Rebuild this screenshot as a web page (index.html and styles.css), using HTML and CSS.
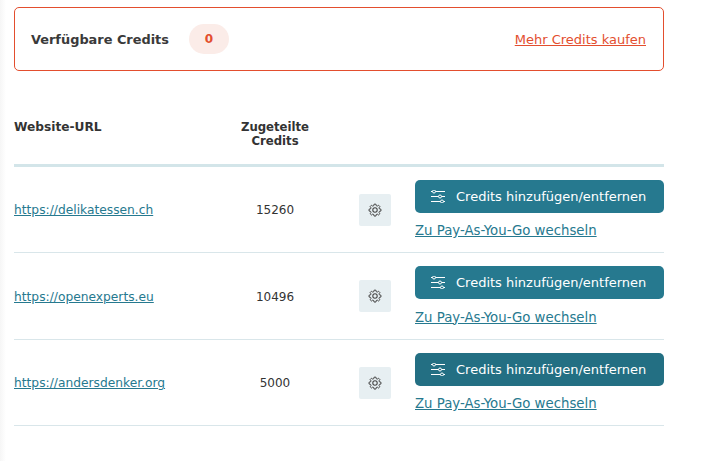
FILE: index.html
```html
<!DOCTYPE html>
<html lang="de">
<head>
<meta charset="utf-8">
<title>Credits</title>
<link rel="stylesheet" href="styles.css">
</head>
<body>
<svg class="defs" width="0" height="0" aria-hidden="true">
  <symbol id="gear" viewBox="0 0 24 24">
    <path fill="none" stroke="currentColor" stroke-width="1.8" stroke-linejoin="round" d="M10.300 2.500h3.400l.5 2.700 1.900.8 2.300-1.600 2.400 2.400-1.600 2.300.8 1.900 2.700.5v3.400l-2.700.5-.8 1.900 1.600 2.300-2.400 2.400-2.300-1.600-1.900.8-.5 2.700h-3.400l-.5-2.700-1.900-.8-2.300 1.600-2.400-2.400 1.600-2.300-.8-1.900-2.700-.5v-3.400l2.700-.5.8-1.900-1.600-2.300 2.400-2.400 2.300 1.600 1.900-.8z" transform="translate(12 12) scale(.95) translate(-12 -13)"/>
    <circle cx="12" cy="12" r="3.800" fill="none" stroke="currentColor" stroke-width="1.800"/>
  </symbol>
  <symbol id="sliders" viewBox="0 0 14 13">
    <g fill="none" stroke="currentColor" stroke-width="1">
      <path d="M4.500 1.500H14M0 1.500H1.500M0 6.500H7.500M10.500 6.500H14M0 11.500H9.500M12.500 11.500H14"/>
      <circle cx="3" cy="1.500" r="1.500"/>
      <circle cx="9" cy="6.500" r="1.500"/>
      <circle cx="11" cy="11.500" r="1.500"/>
    </g>
  </symbol>
</svg>
<main class="page">
  <section class="credits-box">
    <div class="credits-info">
      <strong class="credits-label">Verfügbare Credits</strong>
      <span class="credits-pill">0</span>
    </div>
    <a class="buy-link" href="#">Mehr Credits kaufen</a>
  </section>

  <div class="table">
    <div class="row head">
      <div class="head-url">Website-URL</div>
      <div class="head-credits">Zugeteilte<br>Credits</div>
    </div>

    <div class="row item">
      <a class="site" href="#">https://delikatessen.ch</a>
      <div class="amount">15260</div>
      <div class="gear-cell"><button class="gear"><svg class="gear-icon"><use href="#gear"/></svg></button></div>
      <div class="actions">
        <button class="primary"><svg class="slider-icon"><use href="#sliders"/></svg>Credits hinzufügen/entfernen</button>
        <a class="switch" href="#">Zu Pay-As-You-Go wechseln</a>
      </div>
    </div>

    <div class="row item">
      <a class="site" href="#">https://openexperts.eu</a>
      <div class="amount">10496</div>
      <div class="gear-cell"><button class="gear"><svg class="gear-icon"><use href="#gear"/></svg></button></div>
      <div class="actions">
        <button class="primary"><svg class="slider-icon"><use href="#sliders"/></svg>Credits hinzufügen/entfernen</button>
        <a class="switch" href="#">Zu Pay-As-You-Go wechseln</a>
      </div>
    </div>

    <div class="row item">
      <a class="site" href="#">https://andersdenker.org</a>
      <div class="amount">5000</div>
      <div class="gear-cell"><button class="gear"><svg class="gear-icon"><use href="#gear"/></svg></button></div>
      <div class="actions">
        <button class="primary primary-dark"><svg class="slider-icon"><use href="#sliders"/></svg>Credits hinzufügen/entfernen</button>
        <a class="switch" href="#">Zu Pay-As-You-Go wechseln</a>
      </div>
    </div>
  </div>
</main>
</body>
</html>
```

FILE: styles.css
```css
* { box-sizing: border-box; }

html, body { height: 100%; }

body {
  margin: 0;
  overflow: hidden;
  background: linear-gradient(to right, #f6f6f6 0, #ffffff 6px);
  color: #333333;
  font-family: "DejaVu Sans", Verdana, sans-serif;
  font-size: 12px;
}

.defs { position: absolute; }

.page {
  width: 664px;
  padding: 7px 0 0 14px;
}

.credits-box {
  display: flex;
  align-items: center;
  justify-content: space-between;
  height: 64px;
  padding: 0 17px 0 16px;
  border: 1px solid #e34e2e;
  border-radius: 5px;
}

.credits-info {
  display: flex;
  align-items: center;
  gap: 20px;
}

.credits-label {
  font-size: 12.9px;
  color: #3a3a3a;
}

.credits-pill {
  display: flex;
  align-items: center;
  justify-content: center;
  width: 40px;
  height: 30px;
  border-radius: 15px;
  background: #fbece8;
  color: #e34e2e;
  font-size: 12px;
  font-weight: 700;
}

.buy-link {
  color: #e34e2e;
  font-size: 13px;
}

.table { margin-top: 49px; }

.row {
  display: grid;
  grid-template-columns: 201px 120px 80px 249px;
  align-items: center;
}

.head {
  height: 46.6px;
  align-items: start;
  border-bottom: 3px solid #d3e5e9;
  font-size: 11.7px;
  font-weight: 700;
  line-height: 14px;
  color: #333333;
}

.head-url { font-size: 12.2px; }

.head-credits { text-align: center; }

.item {
  height: 86.5px;
  border-bottom: 1px solid #d9e6ea;
}

.site {
  padding-top: 2px;
  color: #26798f;
  font-size: 12.25px;
}

.amount {
  padding-top: 1.5px;
  text-align: center;
  font-size: 12px;
}

.gear-cell {
  display: flex;
  justify-content: center;
  padding-top: 1px;
}

.gear {
  display: flex;
  align-items: center;
  justify-content: center;
  width: 32px;
  height: 32px;
  padding: 0;
  border: 0;
  border-radius: 2px;
  background: #e7eff2;
  color: #444444;
}

.gear-icon {
  width: 14px;
  height: 14px;
}

.actions {
  display: flex;
  flex-direction: column;
  gap: 10.5px;
}

.primary {
  display: flex;
  align-items: center;
  height: 33px;
  padding: 0 0 0 16px;
  border: 0;
  border-radius: 5px;
  background: #26798f;
  color: #ffffff;
  font-family: inherit;
  font-size: 13px;
  white-space: nowrap;
}

.primary-dark { background: #236f83; }

.slider-icon {
  width: 14px;
  height: 13px;
  margin-right: 11px;
}

.switch {
  color: #26798f;
  font-size: 13.3px;
  line-height: 16px;
}
```
